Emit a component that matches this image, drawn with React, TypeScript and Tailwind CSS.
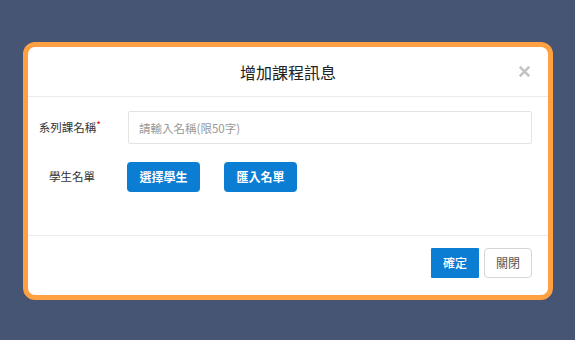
const font = { fontFamily: '"Noto Sans CJK TC", "Noto Sans", sans-serif' };

export default function App() {
  return (
    <div className="w-[575px] h-[340px] bg-[#465573] pt-[42px] pl-[23px]" style={font}>
      <div className="w-[530px] h-[258px] border-[5px] border-[#ffa142] rounded-[12px] bg-white flex flex-col overflow-hidden">
        {/* Header */}
        <div className="relative h-[50px] flex items-center justify-center border-b border-[#ebebeb] shrink-0">
          <h2 className="text-[16px] text-[#222] leading-none">增加課程訊息</h2>
          <button className="absolute right-[18px] top-[19px] w-[11px] h-[11px]">
            <svg viewBox="0 0 10 10" className="w-[11px] h-[11px]" fill="none" stroke="#c4c4c4" strokeWidth={2.4} strokeLinecap="square">
              <path d="M1.5 1.5l7 7M8.5 1.5l-7 7" />
            </svg>
          </button>
        </div>

        {/* Body */}
        <div className="h-[139px] pt-[14px] pr-[16px] border-b border-[#ebebeb] shrink-0">
          <div className="grid grid-cols-[100px_1fr] gap-y-[18px] items-center">
            <div className="text-right pr-[27px] text-[11.5px] text-[#333]">
              系列課名稱<span className="text-[#e00000] text-[10px] align-top relative -top-[2px]">*</span>
            </div>
            <input
              className="h-[33px] border border-[#e3e3e3] rounded-[2px] px-[10px] text-[11.5px] text-[#333] placeholder:text-[#999] outline-none"
              placeholder="請輸入名稱(限50字)"
            />

            <div className="text-right pr-[33px] text-[11.5px] text-[#333]">學生名單</div>
            <div className="flex gap-[24px] -ml-px">
              <button className="w-[73px] h-[30px] rounded-[4px] bg-[#0b7dd3] text-white text-[12px] font-bold">選擇學生</button>
              <button className="w-[73px] h-[30px] rounded-[4px] bg-[#0b7dd3] text-white text-[12px] font-bold">匯入名單</button>
            </div>
          </div>
        </div>

        {/* Footer */}
        <div className="flex-1 flex items-start justify-end gap-[5px] pt-[12px] pr-[16px]">
          <button className="w-[48px] h-[30px] bg-[#0b7dd3] text-white text-[12px] font-medium rounded-[1px]">確定</button>
          <button className="w-[48px] h-[30px] bg-white border border-[#d6d6d6] text-[#555] text-[12px] rounded-[4px]">關閉</button>
        </div>
      </div>
    </div>
  );
}
